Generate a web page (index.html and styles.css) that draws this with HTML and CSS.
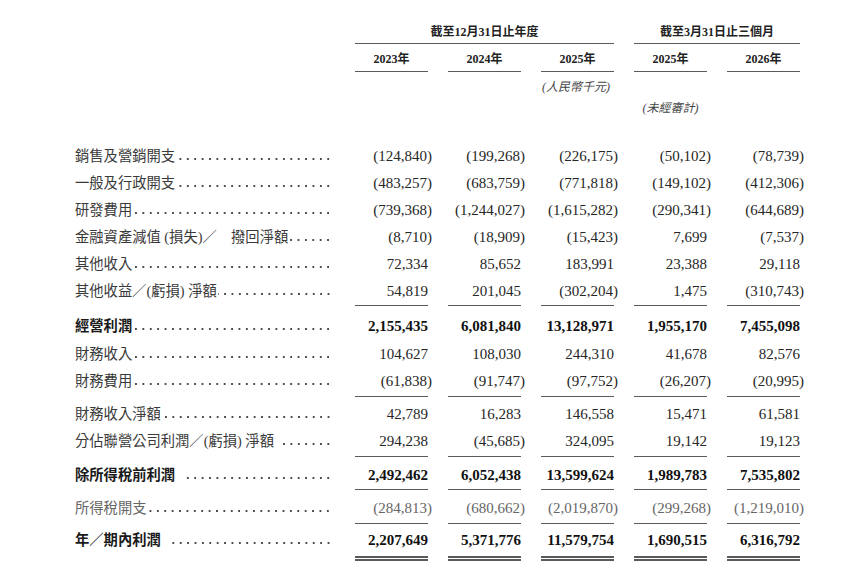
FILE: index.html
```html
<!DOCTYPE html>
<html lang="zh-Hant">
<head>
<meta charset="utf-8">
<title>財務資料</title>
<link rel="stylesheet" href="styles.css">
</head>
<body>
<div class="sheet">
  <div class="grid head-a">
    <div></div>
    <div class="grp grp1">截至12月31日止年度</div>
    <div class="grp grp2">截至3月31日止三個月</div>
  </div>
  <div class="grid head-b">
    <div></div>
    <div class="yr">2023年</div>
    <div class="yr">2024年</div>
    <div class="yr">2025年</div>
    <div class="yr">2025年</div>
    <div class="yr">2026年</div>
  </div>
  <div class="grid head-c">
    <div></div><div></div><div></div>
    <div class="unit">(人民幣千元)</div>
  </div>
  <div class="grid head-d">
    <div></div><div></div><div></div><div></div>
    <div class="audit">(未經審計)</div>
  </div>

  <div class="rows">
    <div class="grid row tight">
      <div class="lbl"><span class="txt">銷售及營銷開支</span><span class="lead"></span></div>
      <div class="num">(124,840<span class="cp">)</span></div>
      <div class="num">(199,268<span class="cp">)</span></div>
      <div class="num">(226,175<span class="cp">)</span></div>
      <div class="num">(50,102<span class="cp">)</span></div>
      <div class="num">(78,739<span class="cp">)</span></div>
    </div>
    <div class="grid row tight">
      <div class="lbl"><span class="txt">一般及行政開支</span><span class="lead"></span></div>
      <div class="num">(483,257<span class="cp">)</span></div>
      <div class="num">(683,759<span class="cp">)</span></div>
      <div class="num">(771,818<span class="cp">)</span></div>
      <div class="num">(149,102<span class="cp">)</span></div>
      <div class="num">(412,306<span class="cp">)</span></div>
    </div>
    <div class="grid row tight">
      <div class="lbl"><span class="txt">研發費用</span><span class="lead"></span></div>
      <div class="num">(739,368<span class="cp">)</span></div>
      <div class="num">(1,244,027<span class="cp">)</span></div>
      <div class="num">(1,615,282<span class="cp">)</span></div>
      <div class="num">(290,341<span class="cp">)</span></div>
      <div class="num">(644,689<span class="cp">)</span></div>
    </div>
    <div class="grid row tight">
      <div class="lbl"><span class="txt">金融資產減值 (損失)／　撥回淨額</span><span class="lead"></span></div>
      <div class="num">(8,710<span class="cp">)</span></div>
      <div class="num">(18,909<span class="cp">)</span></div>
      <div class="num">(15,423<span class="cp">)</span></div>
      <div class="num">7,699</div>
      <div class="num">(7,537<span class="cp">)</span></div>
    </div>
    <div class="grid row tight">
      <div class="lbl"><span class="txt">其他收入</span><span class="lead"></span></div>
      <div class="num">72,334</div>
      <div class="num">85,652</div>
      <div class="num">183,991</div>
      <div class="num">23,388</div>
      <div class="num">29,118</div>
    </div>
    <div class="grid row tight">
      <div class="lbl"><span class="txt">其他收益／(虧損) 淨額</span><span class="lead"></span></div>
      <div class="num u">54,819</div>
      <div class="num u">201,045</div>
      <div class="num u">(302,204<span class="cp">)</span></div>
      <div class="num u">1,475</div>
      <div class="num u">(310,743<span class="cp">)</span></div>
    </div>

    <div class="grid row bold gap7">
      <div class="lbl"><span class="txt">經營利潤</span><span class="lead"></span></div>
      <div class="num">2,155,435</div>
      <div class="num">6,081,840</div>
      <div class="num">13,128,971</div>
      <div class="num">1,955,170</div>
      <div class="num">7,455,098</div>
    </div>
    <div class="grid row">
      <div class="lbl"><span class="txt">財務收入</span><span class="lead"></span></div>
      <div class="num">104,627</div>
      <div class="num">108,030</div>
      <div class="num">244,310</div>
      <div class="num">41,678</div>
      <div class="num">82,576</div>
    </div>
    <div class="grid row">
      <div class="lbl"><span class="txt">財務費用</span><span class="lead"></span></div>
      <div class="num u">(61,838<span class="cp">)</span></div>
      <div class="num u">(91,747<span class="cp">)</span></div>
      <div class="num u">(97,752<span class="cp">)</span></div>
      <div class="num u">(26,207<span class="cp">)</span></div>
      <div class="num u">(20,995<span class="cp">)</span></div>
    </div>

    <div class="grid row gap4">
      <div class="lbl"><span class="txt">財務收入淨額</span><span class="lead"></span></div>
      <div class="num">42,789</div>
      <div class="num">16,283</div>
      <div class="num">146,558</div>
      <div class="num">15,471</div>
      <div class="num">61,581</div>
    </div>
    <div class="grid row">
      <div class="lbl"><span class="txt">分佔聯營公司利潤／(虧損) 淨額</span><span class="lead sp"></span></div>
      <div class="num u">294,238</div>
      <div class="num u">(45,685<span class="cp">)</span></div>
      <div class="num u">324,095</div>
      <div class="num u">19,142</div>
      <div class="num u">19,123</div>
    </div>

    <div class="grid row bold gap5">
      <div class="lbl"><span class="txt">除所得稅前利潤</span><span class="lead sp"></span></div>
      <div class="num u">2,492,462</div>
      <div class="num u">6,052,438</div>
      <div class="num u">13,599,624</div>
      <div class="num u">1,989,783</div>
      <div class="num u">7,535,802</div>
    </div>

    <div class="grid row light gap5">
      <div class="lbl"><span class="txt">所得稅開支</span><span class="lead"></span></div>
      <div class="num u">(284,813<span class="cp">)</span></div>
      <div class="num u">(680,662<span class="cp">)</span></div>
      <div class="num u">(2,019,870<span class="cp">)</span></div>
      <div class="num u">(299,268<span class="cp">)</span></div>
      <div class="num u">(1,219,010<span class="cp">)</span></div>
    </div>

    <div class="grid row bold gap3">
      <div class="lbl"><span class="txt">年／期內利潤</span><span class="lead sp"></span></div>
      <div class="num uu">2,207,649</div>
      <div class="num uu">5,371,776</div>
      <div class="num uu">11,579,754</div>
      <div class="num uu">1,690,515</div>
      <div class="num uu">6,316,792</div>
    </div>
  </div>
</div>
</body>
</html>
```

FILE: styles.css
```css
html, body {
  margin: 0;
  padding: 0;
  background: #ffffff;
}

body {
  font-family: "Liberation Serif", "Noto Sans CJK TC", serif;
  color: #333333;
}

.sheet {
  padding: 22px 0 0 75px;
}

.grid {
  display: grid;
  grid-template-columns: 260px repeat(5, 73px);
  column-gap: 20px;
}

/* ---------- header ---------- */
.head-a {
  font-size: 12px;
  font-weight: bold;
  color: #222222;
}

.grp {
  height: 21px;
  line-height: 21px;
  text-align: center;
  border-bottom: 1px solid #5a5a5a;
}

.grp1 { grid-column: 2 / 5; }
.grp2 { grid-column: 5 / 7; }

.head-b {
  font-size: 12px;
  font-weight: bold;
  color: #222222;
}

.yr {
  padding-top: 3px;
  height: 24px;
  line-height: 24px;
  text-align: center;
  border-bottom: 1px solid #5a5a5a;
}

.head-c,
.head-d {
  font-size: 12px;
  font-style: italic;
  color: #444444;
}

.head-c div { height: 30px; line-height: 30px; }
.head-d div { height: 12px; line-height: 12px; }

.unit {
  text-align: right;
  padding-right: 4px;
}

.audit {
  text-align: center;
}

/* ---------- body rows ---------- */
.rows {
  margin-top: 29px;
}

.row {
  line-height: 27.5px;
}

.row.tight {
  line-height: 27px;
}

.gap7 { margin-top: 7px; }
.gap5 { margin-top: 5px; }
.gap4 { margin-top: 4px; }
.gap3 { margin-top: 3px; }

.lbl {
  display: flex;
  align-items: baseline;
  padding-right: 3px;
  white-space: nowrap;
  font-size: 14.3px;
  color: #3a3a3a;
}

.txt {
  flex: none;
}

/* dot leader drawn as a repeated background on the baseline */
.lead {
  flex: 1 1 0;
  min-width: 0;
  height: 4px;
  margin-left: 1px;
  background-image: radial-gradient(circle, #4a4a4a 0.85px, rgba(74, 74, 74, 0) 1.3px);
  background-size: 7.4px 3.6px;
  background-position: right bottom;
  background-repeat: repeat-x;
}

.lead.sp {
  margin-left: 7px;
}

.num {
  text-align: right;
  font-size: 15px;
  color: #262626;
  white-space: nowrap;
}

.cp {
  margin-right: -4px;
}

.u {
  border-bottom: 1px solid #5a5a5a;
}

.uu {
  padding-bottom: 2px;
  border-bottom: 5px double #5a5a5a;
}

.bold .txt {
  font-weight: bold;
  color: #1a1a1a;
}

.bold .num {
  font-weight: bold;
  color: #111111;
}

.light .lbl,
.light .num {
  color: #666666;
}
```
